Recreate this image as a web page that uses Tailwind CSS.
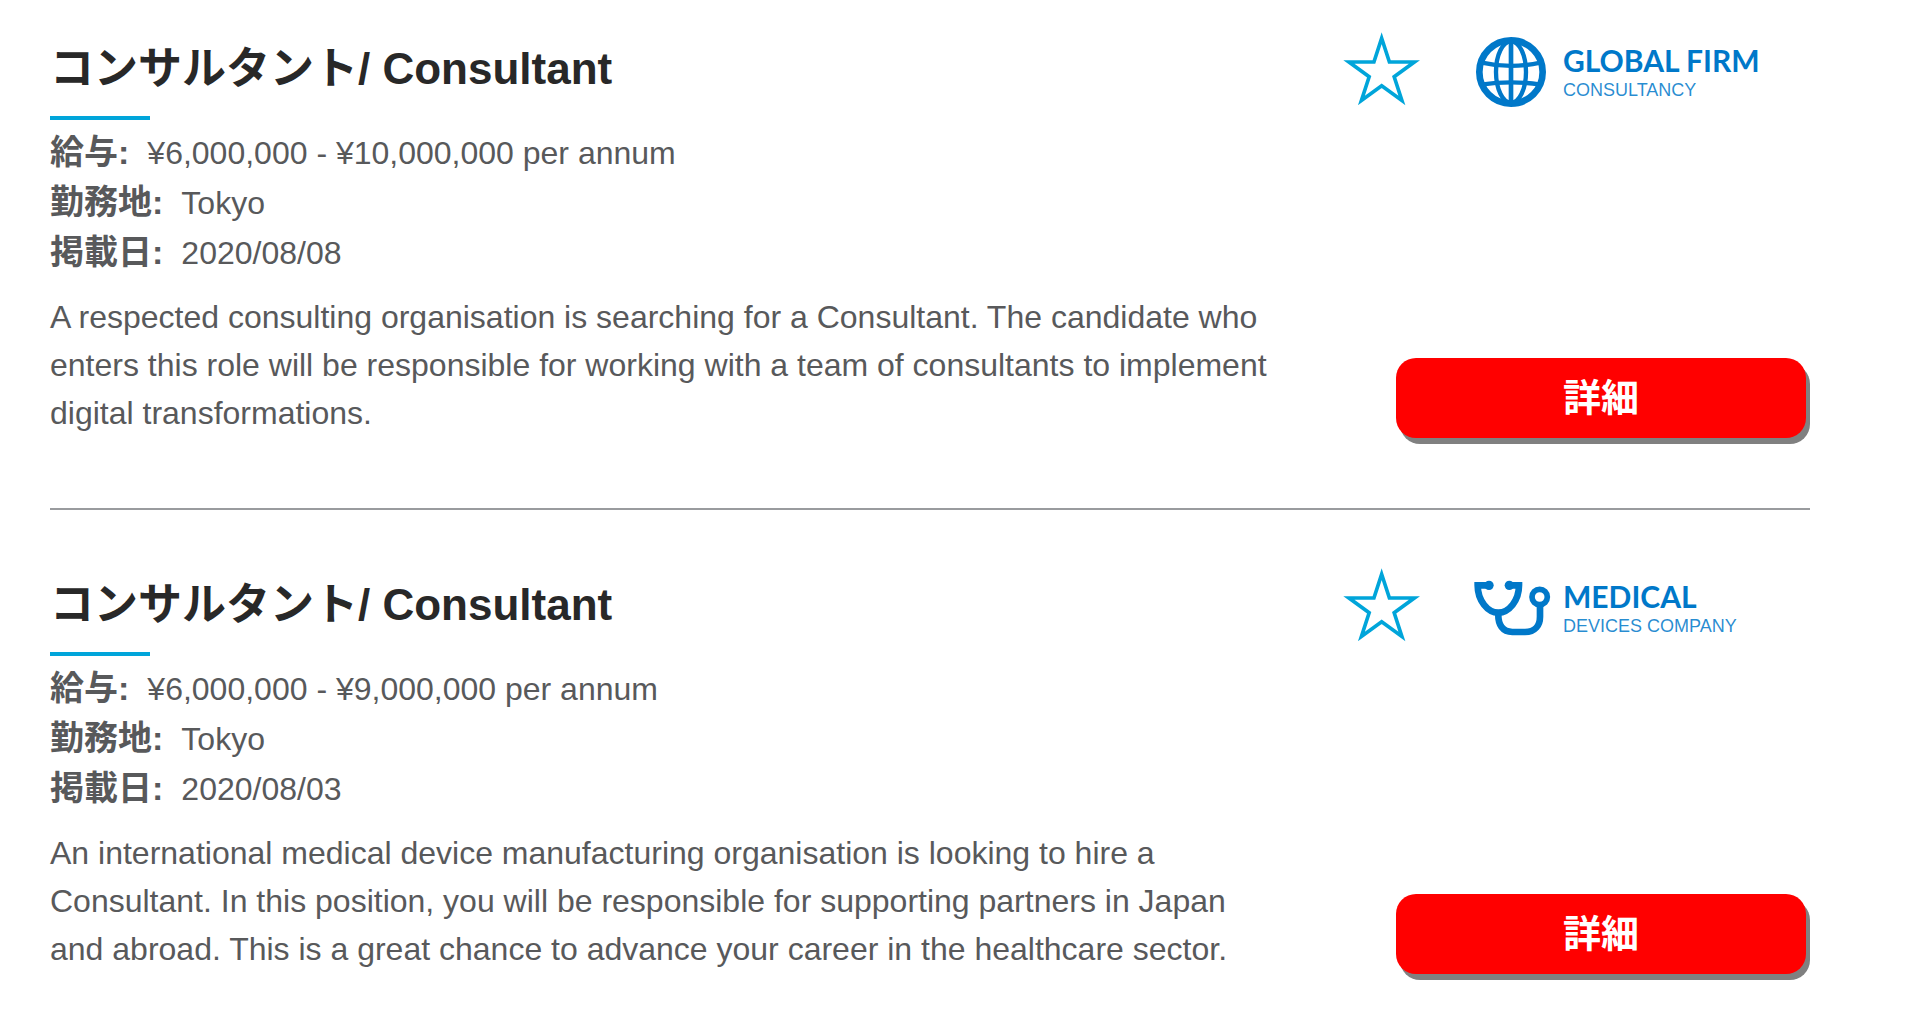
<!DOCTYPE html>
<html lang="ja">
<head>
<meta charset="utf-8">
<meta name="viewport" content="width=device-width, initial-scale=1">
<title>求人一覧</title>
<script src="https://cdn.jsdelivr.net/npm/@tailwindcss/browser@4"></script>
</head>
<body class="bg-white font-['Liberation_Sans','Noto_Sans_CJK_JP',sans-serif] text-[32px] text-[#58595b]">
<main class="pt-8 pl-[50px] pr-[100px]">

  <article class="flex gap-[68px] border-b-2 border-[#999b9e] pb-[70px]">
    <div class="min-w-0 flex-1">
      <h2 class="text-[44px] leading-[74px] font-bold text-[#282828]">コンサルタント/ Consultant</h2>
      <div class="mt-[10px] h-1 w-[100px] bg-[#00a5da]"></div>
      <dl class="mt-[7px] leading-[50px]">
        <div class="flex h-[50px] items-baseline gap-[18px]"><dt class="text-[34px] font-bold">給与:</dt><dd>¥6,000,000 - ¥10,000,000 per annum</dd></div>
        <div class="flex h-[50px] items-baseline gap-[18px]"><dt class="text-[34px] font-bold">勤務地:</dt><dd>Tokyo</dd></div>
        <div class="flex h-[50px] items-baseline gap-[18px]"><dt class="text-[34px] font-bold">掲載日:</dt><dd>2020/08/08</dd></div>
      </dl>
      <p class="mt-4 mb-px leading-[48px]">A respected consulting organisation is searching for a Consultant. The candidate who enters this role will be responsible for working with a team of consultants to implement digital transformations.</p>
    </div>
    <div class="flex w-[467px] shrink-0 flex-col justify-between">
      <div class="flex items-start gap-[55px]">
        <button type="button" aria-label="お気に入り" class="shrink-0">
          <svg class="block h-[75px] w-[77px]" viewBox="68 35 231 225" fill="none" stroke="#00a5da" stroke-width="11" stroke-miterlimit="10"><path d="M184 53.8 207.2 125.1H282.1L221.5 169.2 244.7 240.5 184 196.4 123.3 240.5 146.5 169.2 85.9 125.1H160.8Z"/></svg>
        </button>
        <div class="flex items-center gap-4 pt-1 text-[#0078c9]">
          <svg class="block h-[72px] w-[72px]" viewBox="46 33 216 216" fill="none" stroke="currentColor"><circle cx="154" cy="141" r="95" stroke-width="20"/><path stroke-width="14" d="M154 45V237"/><ellipse cx="154" cy="141" rx="45" ry="92" stroke-width="13"/><path stroke-width="13" d="M62 112Q154 133 246 112M64 179Q154 165 244 179"/></svg>
          <div class="pt-[3px]">
            <div class="font-['Lato',sans-serif] text-[30px] leading-8 font-bold">GLOBAL FIRM</div>
            <div class="text-[18px] leading-7 text-[#0078c9]/85">CONSULTANCY</div>
          </div>
        </div>
      </div>
      <button type="button" class="mr-1 ml-[53px] h-20 rounded-[20px] bg-[#ff0000] text-[38px] leading-[80px] font-bold text-white shadow-[4px_6px_0_#808080]">詳細</button>
    </div>
  </article>

  <article class="mt-[58px] flex gap-[68px] pb-8">
    <div class="min-w-0 flex-1">
      <h2 class="text-[44px] leading-[74px] font-bold text-[#282828]">コンサルタント/ Consultant</h2>
      <div class="mt-[10px] h-1 w-[100px] bg-[#00a5da]"></div>
      <dl class="mt-[7px] leading-[50px]">
        <div class="flex h-[50px] items-baseline gap-[18px]"><dt class="text-[34px] font-bold">給与:</dt><dd>¥6,000,000 - ¥9,000,000 per annum</dd></div>
        <div class="flex h-[50px] items-baseline gap-[18px]"><dt class="text-[34px] font-bold">勤務地:</dt><dd>Tokyo</dd></div>
        <div class="flex h-[50px] items-baseline gap-[18px]"><dt class="text-[34px] font-bold">掲載日:</dt><dd>2020/08/03</dd></div>
      </dl>
      <p class="mt-4 mb-px leading-[48px]">An international medical device manufacturing organisation is looking to hire a Consultant. In this position, you will be responsible for supporting partners in Japan and abroad. This is a great chance to advance your career in the healthcare sector.</p>
    </div>
    <div class="flex w-[467px] shrink-0 flex-col justify-between">
      <div class="flex items-start gap-[53px]">
        <button type="button" aria-label="お気に入り" class="shrink-0">
          <svg class="block h-[75px] w-[77px]" viewBox="68 35 231 225" fill="none" stroke="#00a5da" stroke-width="11" stroke-miterlimit="10"><path d="M184 53.8 207.2 125.1H282.1L221.5 169.2 244.7 240.5 184 196.4 123.3 240.5 146.5 169.2 85.9 125.1H160.8Z"/></svg>
        </button>
        <div class="flex items-center gap-3 pt-1 text-[#0078c9]">
          <svg class="block h-[72px] w-[78px]" viewBox="40 22 234 216" fill="none" stroke="currentColor" stroke-width="20"><path d="M88 62H54C54 108 84 144 116 144S178 108 178 62H149"/><circle cx="88" cy="62" r="14" fill="currentColor" stroke="none"/><circle cx="149" cy="62" r="14" fill="currentColor" stroke="none"/><path d="M116 144C114 182 130 202 158 202H196C226 202 241 182 241 156V122"/><circle cx="240" cy="97" r="23" stroke-width="17"/></svg>
          <div class="pt-[3px]">
            <div class="font-['Lato',sans-serif] text-[30px] leading-8 font-bold">MEDICAL</div>
            <div class="text-[18px] leading-7 text-[#0078c9]/85">DEVICES COMPANY</div>
          </div>
        </div>
      </div>
      <button type="button" class="mr-1 ml-[53px] h-20 rounded-[20px] bg-[#ff0000] text-[38px] leading-[80px] font-bold text-white shadow-[4px_6px_0_#808080]">詳細</button>
    </div>
  </article>

</main>
</body>
</html>
